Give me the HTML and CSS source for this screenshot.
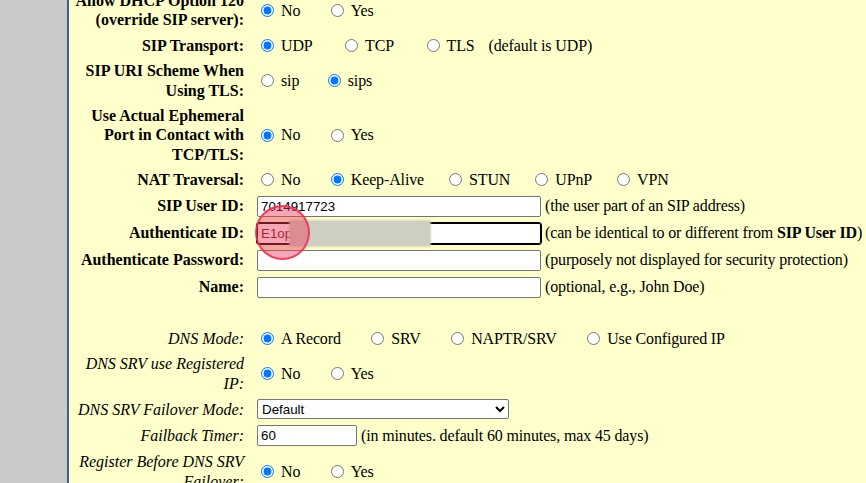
FILE: index.html
```html
<!DOCTYPE html>
<html>
<head>
<meta charset="utf-8">
<title>Ext settings</title>
<link rel="stylesheet" href="styles.css">
</head>
<body>
<div class="page">
  <div class="side"></div>
  <div class="main">
    <table class="cfg">
      <tr>
        <th><div class="lbl">Allow DHCP Option 120 (override SIP server):</div></th>
        <td><div class="opts"><label class="opt"><input type="radio" name="dhcp" checked>No</label><label class="opt"><input type="radio" name="dhcp">Yes</label></div></td>
      </tr>
      <tr>
        <th><div class="lbl">SIP Transport:</div></th>
        <td><div class="opts wide"><label class="opt"><input type="radio" name="tr" checked>UDP</label><label class="opt"><input type="radio" name="tr">TCP</label><label class="opt tight"><input type="radio" name="tr">TLS</label><span class="note">(default is UDP)</span></div></td>
      </tr>
      <tr>
        <th><div class="lbl">SIP URI Scheme When Using TLS:</div></th>
        <td><div class="opts"><label class="opt short"><input type="radio" name="uri">sip</label><label class="opt"><input type="radio" name="uri" checked>sips</label></div></td>
      </tr>
      <tr>
        <th><div class="lbl">Use Actual Ephemeral Port in Contact with TCP/TLS:</div></th>
        <td><div class="opts"><label class="opt"><input type="radio" name="eph" checked>No</label><label class="opt"><input type="radio" name="eph">Yes</label></div></td>
      </tr>
      <tr>
        <th><div class="lbl">NAT Traversal:</div></th>
        <td><div class="opts"><label class="opt"><input type="radio" name="nat">No</label><label class="opt narrow"><input type="radio" name="nat" checked>Keep-Alive</label><label class="opt narrow"><input type="radio" name="nat">STUN</label><label class="opt narrow"><input type="radio" name="nat">UPnP</label><label class="opt"><input type="radio" name="nat">VPN</label></div></td>
      </tr>
      <tr>
        <th><div class="lbl">SIP User ID:</div></th>
        <td><div class="field"><input type="text" class="txt" value="7014917723"><span class="note">(the user part of an SIP address)</span></div></td>
      </tr>
      <tr>
        <th><div class="lbl">Authenticate ID:</div></th>
        <td><div class="field"><span class="focuswrap"><input type="text" class="txt focus" value="E1op"><span class="redact"></span><span class="tap"></span></span><span class="note">(can be identical to or different from <b>SIP User ID</b>)</span></div></td>
      </tr>
      <tr>
        <th><div class="lbl">Authenticate Password:</div></th>
        <td><div class="field"><input type="password" class="txt" value=""><span class="note">(purposely not displayed for security protection)</span></div></td>
      </tr>
      <tr>
        <th><div class="lbl">Name:</div></th>
        <td><div class="field"><input type="text" class="txt" value=""><span class="note">(optional, e.g., John Doe)</span></div></td>
      </tr>
      <tr>
        <th><div class="lbl">&nbsp;</div></th>
        <td>&nbsp;</td>
      </tr>
      <tr>
        <th class="it"><div class="lbl">DNS Mode:</div></th>
        <td><div class="opts"><label class="opt"><input type="radio" name="dns" checked>A Record</label><label class="opt"><input type="radio" name="dns">SRV</label><label class="opt"><input type="radio" name="dns">NAPTR/SRV</label><label class="opt"><input type="radio" name="dns">Use Configured IP</label></div></td>
      </tr>
      <tr>
        <th class="it"><div class="lbl">DNS SRV use Registered IP:</div></th>
        <td><div class="opts"><label class="opt"><input type="radio" name="srvreg" checked>No</label><label class="opt"><input type="radio" name="srvreg">Yes</label></div></td>
      </tr>
      <tr>
        <th class="it"><div class="lbl">DNS SRV Failover Mode:</div></th>
        <td><div class="field"><select class="sel"><option>Default</option><option>Saved one until no response</option></select></div></td>
      </tr>
      <tr>
        <th class="it"><div class="lbl">Failback Timer:</div></th>
        <td><div class="field"><input type="text" class="txt short" value="60"><span class="note">(in minutes. default 60 minutes, max 45 days)</span></div></td>
      </tr>
      <tr>
        <th class="it"><div class="lbl">Register Before DNS SRV Failover:</div></th>
        <td><div class="opts"><label class="opt"><input type="radio" name="regb" checked>No</label><label class="opt"><input type="radio" name="regb">Yes</label></div></td>
      </tr>
    </table>
  </div>
</div>
</body>
</html>
```

FILE: styles.css
```css
html, body {
  margin: 0;
  padding: 0;
}

body {
  font-family: "Liberation Serif", "Times New Roman", serif;
  font-size: 16px;
  color: #000;
}

.page {
  display: flex;
  height: 483px;
  overflow: hidden;
}

.side {
  width: 67px;
  flex: none;
  background: #c9c9c9;
}

.main {
  flex: 1;
  min-width: 0;
  background: #ffffcc;
  border-left: 2px solid #3e6189;
  overflow: hidden;
}

.cfg {
  width: max-content;
  border-collapse: separate;
  border-spacing: 2px;
  margin-top: -13px;
  line-height: 19.4px;
}

.cfg th,
.cfg td {
  padding: 2px;
  vertical-align: middle;
}

.cfg th {
  text-align: right;
  font-weight: bold;
}

.lbl {
  width: 171px;
}

.cfg th.it {
  font-weight: normal;
  font-style: italic;
}

.cfg td {
  padding-left: 8px;
  white-space: nowrap;
  letter-spacing: -0.14px;
}

.opts {
  display: flex;
  align-items: center;
}

.opt {
  display: inline-flex;
  align-items: center;
  margin-right: 25.5px;
}

.opt.short {
  margin-right: 23.5px;
}

.opt.narrow {
  margin-right: 20px;
}

.opt input {
  width: 13px;
  height: 13px;
  margin: 0 7px 0 5px;
}

.opts.wide .opt {
  margin-right: 27.5px;
}

.opts.wide .opt.tight {
  margin-right: 14px;
}

.field {
  display: flex;
  align-items: center;
  gap: 4px;
}

.txt {
  box-sizing: border-box;
  width: 284px;
  height: 21px;
  margin: 0 0 0 1px;
  padding: 1px 3px;
  border: 1px solid #767676;
  border-radius: 2px;
  background: #fff;
  font-family: "Liberation Sans", Arial, sans-serif;
  font-size: 13.33px;
  letter-spacing: 0;
  color: #000;
}

.txt.short {
  width: 100px;
}

.txt.focus {
  border: 1px solid #000;
  outline: 1px solid #000;
  outline-offset: 0;
  color: #6a1020;
}

.sel {
  box-sizing: border-box;
  width: 252px;
  height: 20px;
  margin: 0 0 0 1px;
  font-family: "Liberation Sans", Arial, sans-serif;
  font-size: 13.33px;
  letter-spacing: 0;
  background: #fff;
  border: 1px solid #767676;
  border-radius: 2px;
  color: #000;
}

.note b {
  font-weight: bold;
}

.focuswrap {
  position: relative;
  display: inline-block;
  height: 21px;
}

.redact {
  position: absolute;
  left: 34px;
  top: -2px;
  width: 140px;
  height: 25px;
  background: #cfcfc1;
  box-shadow: 0 0 2px 1px rgba(205, 205, 190, 0.8);
}

.tap {
  position: absolute;
  left: -1px;
  top: -17.5px;
  width: 55px;
  height: 55px;
  box-sizing: border-box;
  border-radius: 50%;
  background: rgba(236, 60, 90, 0.45);
  border: 2px solid rgba(232, 50, 85, 0.85);
}
```
